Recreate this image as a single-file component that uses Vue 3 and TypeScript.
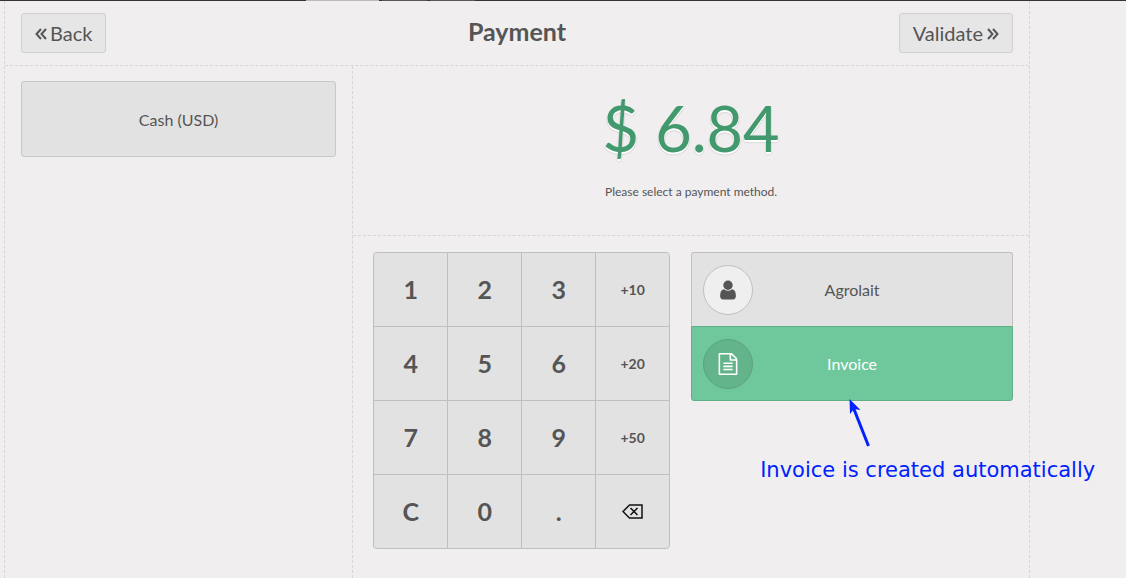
<script setup lang="ts">
import { ref } from 'vue'

interface Key {
  label: string
  kind: 'digit' | 'mode' | 'erase'
}

const digit = (label: string): Key => ({ label, kind: 'digit' })
const mode = (label: string): Key => ({ label, kind: 'mode' })

const keys: Key[] = [
  digit('1'), digit('2'), digit('3'), mode('+10'),
  digit('4'), digit('5'), digit('6'), mode('+20'),
  digit('7'), digit('8'), digit('9'), mode('+50'),
  digit('C'), digit('0'), digit('.'), { label: 'Backspace', kind: 'erase' },
]

const methods = ['Cash (USD)']
const customer = ref('Agrolait')
const invoiced = ref(true)
</script>

<template>
  <div class="page">
    <div class="strip"></div>
    <main class="screen">
      <header class="bar">
        <div class="side">
          <button type="button" class="nav">
            <svg class="chevrons" viewBox="0 0 12 12" aria-hidden="true">
              <path d="M6 1 1.500 6 6 11M11 1 6.500 6l4.500 5" />
            </svg>
            <span>Back</span>
          </button>
        </div>
        <h1>Payment</h1>
        <div class="side end">
          <button type="button" class="nav">
            <span>Validate</span>
            <svg class="chevrons" viewBox="0 0 12 12" aria-hidden="true">
              <path d="M1 1l4.500 5L1 11M6 1l4.500 5L6 11" />
            </svg>
          </button>
        </div>
      </header>

      <div class="body">
        <section class="methods">
          <button v-for="m in methods" :key="m" type="button" class="method">{{ m }}</button>
        </section>

        <section class="content">
          <div class="summary">
            <div class="total">$ 6.84</div>
            <p class="hint">Please select a payment method.</p>
          </div>

          <div class="work">
            <div class="numpad">
              <button
                v-for="k in keys"
                :key="k.label"
                type="button"
                :class="['key', k.kind]"
                :aria-label="k.label"
              >
                <svg v-if="k.kind === 'erase'" class="erase-icon" viewBox="0 0 21 15" aria-hidden="true">
                  <path d="M7.500 1H20v13H7.500L1 7.500z" />
                  <path d="m8.500 4 7 7m0-7-7 7" />
                </svg>
                <template v-else>{{ k.label }}</template>
              </button>
            </div>

            <div class="options">
              <button type="button" class="option">
                <span class="disc">
                  <svg class="glyph" viewBox="0 0 1792 1792" aria-hidden="true">
                    <path d="M1536 1399q0 109-62.5 187t-150.5 78h-854q-88 0-150.5-78t-62.5-187q0-85 8.5-160.5t31.5-152 58.5-131 94-89 134.5-34.5q131 128 313 128t313-128q76 0 134.5 34.5t94 89 58.5 131 31.5 152 8.5 160.5zm-256-887q0 159-112.5 271.5t-271.5 112.5-271.5-112.5-112.5-271.5 112.5-271.5 271.5-112.5 271.5 112.5 112.5 271.5z" />
                  </svg>
                </span>
                <span>{{ customer }}</span>
              </button>
              <button
                type="button"
                :class="['option', { active: invoiced }]"
                :aria-pressed="invoiced"
                @click="invoiced = !invoiced"
              >
                <span class="disc">
                  <svg class="glyph" viewBox="0 0 1792 1792" aria-hidden="true">
                    <path d="M1596 380q28 28 48 76t20 88v1152q0 40-28 68t-68 28h-1344q-40 0-68-28t-28-68v-1600q0-40 28-68t68-28h896q40 0 88 20t76 48zm-444-244v376h376q-10-29-22-41l-313-313q-12-12-41-22zm384 1528v-1024h-416q-40 0-68-28t-28-68v-416h-768v1536h1280zm-1024-864q0-14 9-23t23-9h704q14 0 23 9t9 23v64q0 14-9 23t-23 9h-704q-14 0-23-9t-9-23v-64zm736 224q14 0 23 9t9 23v64q0 14-9 23t-23 9h-704q-14 0-23-9t-9-23v-64q0-14 9-23t23-9h704zm0 256q14 0 23 9t9 23v64q0 14-9 23t-23 9h-704q-14 0-23-9t-9-23v-64q0-14 9-23t23-9h704z" />
                  </svg>
                </span>
                <span>Invoice</span>
              </button>
              <div class="note">
                <svg class="arrow" viewBox="0 0 24 50" aria-hidden="true">
                  <path class="shaft" d="M4.500 9 19.500 47" />
                  <path class="head" d="M0.500 0 11.500 11 5 10 1 15z" />
                </svg>
                <span class="note-text">Invoice is created automatically</span>
              </div>
            </div>
          </div>
        </section>
      </div>
    </main>
  </div>
</template>

<style>
body {
  margin: 0;
  background: #f0eeee;
}
</style>

<style scoped>
.page {
  display: flex;
  flex-direction: column;
  box-sizing: border-box;
  min-height: 100vh;
  overflow: hidden;
  font-family: Lato, "Liberation Sans", sans-serif;
  font-size: 16px;
  color: #555;
}
.strip {
  height: 1px;
  background: linear-gradient(90deg, #393137 306px, #bbb 306px, #bbb 379px, #393137 379px, #393137 382px, #5c555a 382px, #5c555a 427px, #393137 427px, #393137 430px, #5c555a 430px, #5c555a 475px, #393137 475px);
}
.screen {
  flex: 1;
  display: flex;
  flex-direction: column;
  box-sizing: border-box;
  width: calc(100% - 8px);
  max-width: 1026px;
  margin-left: 4px;
  border: dashed #d7d5d5;
  border-width: 0 1px;
}
button {
  margin: 0;
  font: inherit;
  color: inherit;
  cursor: pointer;
}
.bar {
  display: flex;
  align-items: flex-start;
  padding: 12px 16px;
  border-bottom: 1px dashed #d7d5d5;
}
.side {
  flex: 1;
  display: flex;
}
.end {
  justify-content: flex-end;
}
h1 {
  margin: 0;
  font-size: 25px;
  line-height: 36px;
  font-weight: 700;
}
.nav {
  display: flex;
  align-items: center;
  gap: 3px;
  height: 40px;
  padding: 0 13px;
  border: 1px solid #d0d0d0;
  border-radius: 3px;
  background: #e6e6e6;
  font-size: 20px;
}
.end .nav {
  gap: 4px;
}
.chevrons {
  width: 12px;
  height: 12px;
  margin-top: 2px;
  fill: none;
  stroke: currentColor;
  stroke-width: 2;
}
.body {
  flex: 1;
  display: flex;
}
.methods {
  box-sizing: border-box;
  width: 34%;
  padding: 15px 16px;
  border-right: 1px dashed #d7d5d5;
}
.method {
  width: 100%;
  height: 76px;
  border: 1px solid #c8c8c8;
  border-radius: 3px;
  background: #e2e2e2;
}
.content {
  flex: 1;
}
.summary {
  box-sizing: border-box;
  min-height: 170px;
  padding-top: 24px;
  text-align: center;
  border-bottom: 1px dashed #d7d5d5;
}
.total {
  font-size: 63px;
  line-height: 76px;
  color: #43996e;
  text-shadow: 0 2px #fff, 0 2px 2px rgba(0, 0, 0, 0.27);
}
.hint {
  margin: 18px 0 0;
  font-size: 12px;
  line-height: 16px;
}
.work {
  display: flex;
  align-items: flex-start;
  gap: 21px;
  padding: 16px 16px 16px 20px;
}
.numpad {
  display: grid;
  grid-template-columns: repeat(4, 74px);
  grid-auto-rows: 74px;
  border: solid #bfbfbf;
  border-width: 1px 0 0 1px;
  border-radius: 4px;
  overflow: hidden;
}
.key {
  padding: 0;
  border: solid #bfbfbf;
  border-width: 0 1px 1px 0;
  background: #e2e2e2;
  font-size: 25px;
  font-weight: 700;
}
.digit {
  padding-bottom: 2px;
}
.key:last-child {
  border-bottom-right-radius: 4px;
}
.key:nth-child(4) {
  border-top-right-radius: 4px;
}
.key:nth-child(13) {
  border-bottom-left-radius: 4px;
}
.mode {
  font-size: 14px;
}
.erase-icon {
  display: block;
  width: 21px;
  height: 15px;
  margin: 0 auto;
  fill: none;
  stroke: #111;
  stroke-width: 1.5;
}
.options {
  position: relative;
  flex: 1;
}
.option {
  display: grid;
  grid-template-columns: 50px 1fr 50px;
  align-items: center;
  width: 100%;
  height: 74px;
  padding: 0 11px;
  border: 1px solid #bfbfbf;
  border-bottom: 0;
  border-radius: 3px 3px 0 0;
  background: #e2e2e2;
}
.option + .option {
  height: 75px;
  border-bottom: 1px solid #bfbfbf;
  border-radius: 0 0 3px 3px;
}
.disc {
  display: flex;
  align-items: center;
  justify-content: center;
  box-sizing: border-box;
  height: 50px;
  border: 1px solid #bfbfbf;
  border-radius: 50%;
  background: #efefef;
}
.glyph {
  width: 22px;
  height: 22px;
  fill: currentColor;
}
.option.active {
  border-color: #5fae86;
  background: #6ec89b;
  color: #fff;
}
.active .disc {
  border-color: #59a37d;
  background: #64b48b;
}
.note {
  position: absolute;
  top: 147px;
  left: 69px;
  color: #0022ff;
  font: 21px/26px "DejaVu Sans", sans-serif;
  white-space: nowrap;
}
.arrow {
  display: block;
  width: 24px;
  height: 50px;
  margin-left: 89px;
}
.shaft {
  fill: none;
  stroke: currentColor;
  stroke-width: 3;
}
.head {
  fill: currentColor;
}
.note-text {
  display: block;
  margin-top: 8px;
}
</style>
